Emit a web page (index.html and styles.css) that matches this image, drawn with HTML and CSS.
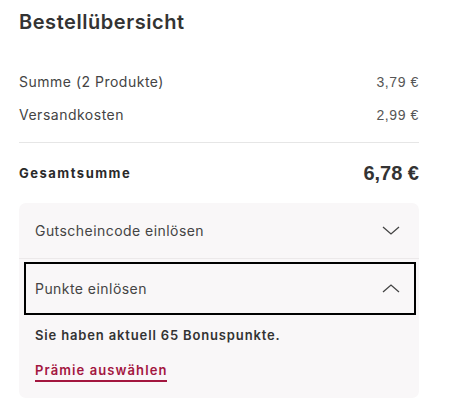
FILE: index.html
```html
<!DOCTYPE html>
<html lang="de">
<head>
<meta charset="utf-8">
<link rel="stylesheet" href="styles.css">
</head>
<body>
<div class="summary">
  <h2 class="title">Bestellübersicht</h2>
  <div class="rows">
    <div class="row"><span class="label">Summe (2 Produkte)</span><span class="price">3,79 €</span></div>
    <div class="row"><span class="label">Versandkosten</span><span class="price">2,99 €</span></div>
  </div>
  <div class="total">
    <span class="total-label">Gesamtsumme</span>
    <span class="total-price">6,78 €</span>
  </div>
  <div class="card">
    <div class="acc-head">
      <span class="acc-title">Gutscheincode einlösen</span>
      <svg class="chev" width="18" height="9" viewBox="0 0 18 9"><path d="M1 1 L9 8 L17 1" fill="none" stroke="#444" stroke-width="1.3"/></svg>
    </div>
    <div class="acc-head focused">
      <span class="acc-title">Punkte einlösen</span>
      <svg class="chev" width="18" height="9" viewBox="0 0 18 9"><path d="M1 8 L9 1 L17 8" fill="none" stroke="#444" stroke-width="1.3"/></svg>
    </div>
    <div class="acc-body">
      <p class="points">Sie haben aktuell 65 Bonuspunkte.</p>
      <a class="reward" href="#">Prämie auswählen</a>
    </div>
  </div>
</div>
</body>
</html>
```
FILE: styles.css
```css
* { box-sizing: border-box; }
body {
  margin: 0;
  background: #fff;
  font-family: Inter, "Noto Sans", sans-serif;
  color: #3a3a3a;
}
.summary {
  width: 400px;
  margin-left: 19px;
}
.title {
  margin: 0;
  height: 44px;
  display: flex;
  align-items: center;
  font-size: 20px;
  font-weight: 600;
  color: #333;
  letter-spacing: 0.55px;
}
.rows {
  padding-top: 21px;
  padding-bottom: 11px;
  border-bottom: 1px solid #e6e6e6;
}
.row {
  height: 33px;
  display: flex;
  align-items: center;
  justify-content: space-between;
}
.label {
  font-size: 14px;
  color: #444;
  letter-spacing: 0.5px;
}
.price {
  font-family: "Liberation Sans", Arial, sans-serif;
  font-size: 14px;
  color: #555;
  letter-spacing: 0.6px;
}
.total {
  height: 60px;
  display: flex;
  align-items: center;
  justify-content: space-between;
}
.total-label {
  font-size: 13px;
  font-weight: 700;
  color: #2a2a2a;
  letter-spacing: 1.5px;
}
.total-price {
  font-family: "Liberation Sans", Arial, sans-serif;
  font-size: 20px;
  font-weight: 700;
  color: #333;
}
.card {
  background: #f9f7f8;
  border-radius: 7px;
  padding-bottom: 16px;
}
.acc-head {
  height: 56px;
  display: flex;
  align-items: center;
  justify-content: space-between;
  padding: 0 19px 0 16px;
  border-bottom: 1px solid #ece9ea;
}
.acc-head.focused {
  height: 53px;
  margin: 3px 3px 0 5px;
  border: 2px solid #000;
  padding: 0 14px 0 9px;
}
.acc-title {
  font-size: 14px;
  color: #444;
  letter-spacing: 0.45px;
}
.chev { display: block; }
.acc-body {
  padding: 10px 16px 0 16px;
}
.points {
  margin: 0;
  height: 20px;
  display: flex;
  align-items: center;
  font-size: 13px;
  font-weight: 600;
  color: #333;
  letter-spacing: 0.85px;
}
.reward {
  display: inline-block;
  margin-top: 16px;
  font-size: 13px;
  font-weight: 600;
  color: #a3163f;
  text-decoration: none;
  border-bottom: 2px solid #a3163f;
  line-height: 18px;
  padding-bottom: 1px;
  letter-spacing: 1.1px;
}
```
